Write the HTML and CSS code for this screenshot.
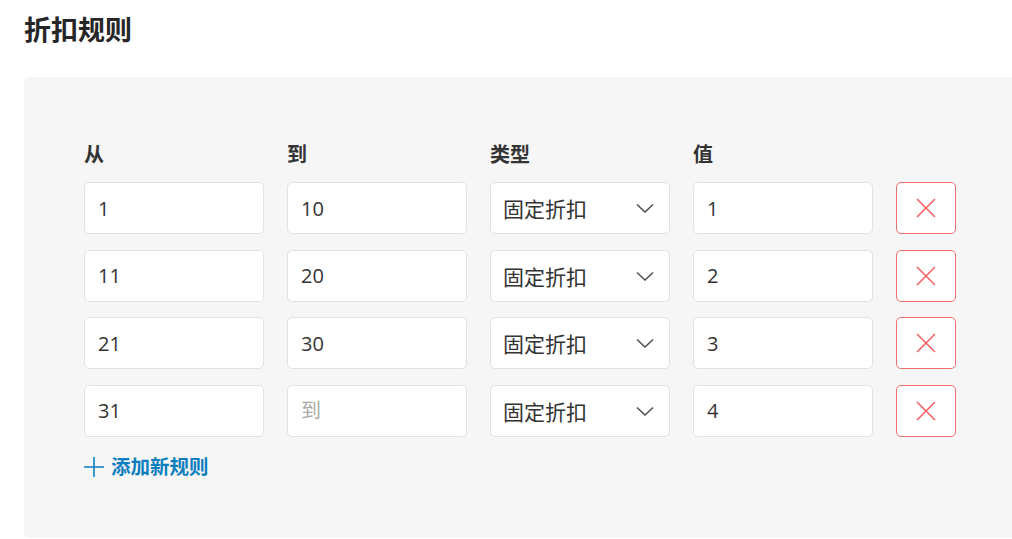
FILE: index.html
```html
<!DOCTYPE html>
<html lang="zh-CN">
<head>
    <meta charset="UTF-8">
    <meta name="viewport" content="width=device-width, initial-scale=1.0">
    <title>折扣规则</title>
    <link rel="stylesheet" href="styles.css">
</head>
<body>

    <h1>折扣规则</h1>

    <!-- Rules panel -->
    <div class="panel">
        <div class="rules">
            <label>从</label>
            <label>到</label>
            <label>类型</label>
            <label>值</label>
            <span></span>

            <input type="text" value="1">
            <input type="text" value="10">
            <div class="select"><span>固定折扣</span><svg width="18" height="10" viewBox="0 0 18 10"><path d="M1 1.5 L9 9 L17 1.5" fill="none" stroke="#555" stroke-width="1.6"/></svg></div>
            <input type="text" value="1">
            <button class="delete-button"><svg width="20" height="20" viewBox="0 0 20 20"><path d="M1 1 L19 19 M19 1 L1 19" stroke="#f25c5c" stroke-width="1.5"/></svg></button>

            <input type="text" value="11">
            <input type="text" value="20">
            <div class="select"><span>固定折扣</span><svg width="18" height="10" viewBox="0 0 18 10"><path d="M1 1.5 L9 9 L17 1.5" fill="none" stroke="#555" stroke-width="1.6"/></svg></div>
            <input type="text" value="2">
            <button class="delete-button"><svg width="20" height="20" viewBox="0 0 20 20"><path d="M1 1 L19 19 M19 1 L1 19" stroke="#f25c5c" stroke-width="1.5"/></svg></button>

            <input type="text" value="21">
            <input type="text" value="30">
            <div class="select"><span>固定折扣</span><svg width="18" height="10" viewBox="0 0 18 10"><path d="M1 1.5 L9 9 L17 1.5" fill="none" stroke="#555" stroke-width="1.6"/></svg></div>
            <input type="text" value="3">
            <button class="delete-button"><svg width="20" height="20" viewBox="0 0 20 20"><path d="M1 1 L19 19 M19 1 L1 19" stroke="#f25c5c" stroke-width="1.5"/></svg></button>

            <input type="text" value="31">
            <input type="text" placeholder="到">
            <div class="select"><span>固定折扣</span><svg width="18" height="10" viewBox="0 0 18 10"><path d="M1 1.5 L9 9 L17 1.5" fill="none" stroke="#555" stroke-width="1.6"/></svg></div>
            <input type="text" value="4">
            <button class="delete-button"><svg width="20" height="20" viewBox="0 0 20 20"><path d="M1 1 L19 19 M19 1 L1 19" stroke="#f25c5c" stroke-width="1.5"/></svg></button>
        </div>

        <!-- Add rule link -->
        <a class="add-rule" href="#"><svg width="20" height="20" viewBox="0 0 20 20"><path d="M10 0 V20 M0 10 H20" stroke="#0b7ec0" stroke-width="1.6"/></svg>添加新规则</a>
    </div>

</body>
</html>
```

FILE: styles.css
```css
body {
    font-family: "Open Sans", "Noto Sans CJK SC", sans-serif;
    margin: 0;
    padding: 0 0 0 24px;
    background-color: #ffffff;
    color: #333;
    overflow: hidden;
}
h1 {
    margin: 11px 0 28px;
    font-size: 27px;
    line-height: 38px;
    font-weight: bold;
    color: #262626;
}
.panel {
    background-color: #f6f6f6;
    border-radius: 6px;
    height: 461px;
    padding: 64px 0 0 60px;
    box-sizing: border-box;
    margin-right: -10px;
}
.rules {
    display: grid;
    grid-template-columns: 180px 180px 180px 180px 60px;
    column-gap: 23px;
    row-gap: 15.5px;
}
label {
    font-size: 20px;
    line-height: 28px;
    font-weight: bold;
    color: #333;
    margin-bottom: -2.5px;
}
input {
    height: 52px;
    box-sizing: border-box;
    border: 1px solid #e1e1e1;
    border-radius: 5px;
    background-color: white;
    padding: 0 13px;
    font-family: inherit;
    font-size: 20px;
    color: #333;
    outline: none;
}
input::placeholder {
    color: #aaa;
}
/* Dropdown look-alike */
.select {
    height: 52px;
    box-sizing: border-box;
    border: 1px solid #e1e1e1;
    border-radius: 5px;
    background-color: white;
    padding: 0 15px 0 12px;
    display: flex;
    align-items: center;
    justify-content: space-between;
    font-size: 21px;
    color: #333;
}
.delete-button {
    height: 52px;
    box-sizing: border-box;
    border: 1px solid #f26d6d;
    border-radius: 5px;
    background-color: white;
    display: flex;
    align-items: center;
    justify-content: center;
    padding: 0;
    cursor: pointer;
}
.add-rule {
    display: inline-flex;
    align-items: center;
    gap: 7px;
    margin-top: 16px;
    font-size: 19.5px;
    line-height: 28px;
    font-weight: bold;
    color: #0b7ec0;
    text-decoration: none;
}
```
